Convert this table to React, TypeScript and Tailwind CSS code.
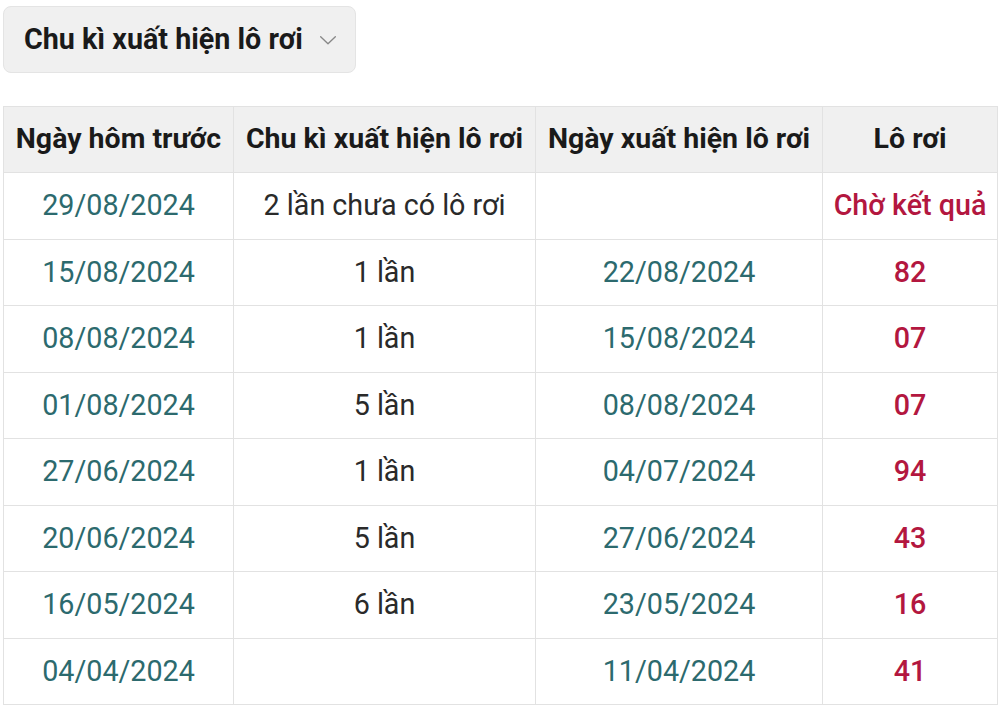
const rows: [string, string, string, string][] = [
  ['29/08/2024', '2 lần chưa có lô rơi', '', 'Chờ kết quả'],
  ['15/08/2024', '1 lần', '22/08/2024', '82'],
  ['08/08/2024', '1 lần', '15/08/2024', '07'],
  ['01/08/2024', '5 lần', '08/08/2024', '07'],
  ['27/06/2024', '1 lần', '04/07/2024', '94'],
  ['20/06/2024', '5 lần', '27/06/2024', '43'],
  ['16/05/2024', '6 lần', '23/05/2024', '16'],
  ['04/04/2024', '', '11/04/2024', '41'],
];

const headers = ['Ngày hôm trước', 'Chu kì xuất hiện lô rơi', 'Ngày xuất hiện lô rơi', 'Lô rơi'];
const widths = ['w-[230px]', 'w-[302px]', 'w-[287px]', 'w-[175px]'];

export default function App() {
  return (
    <div className="min-h-[707px] bg-white pt-[6px] pl-[3px] font-['Roboto',sans-serif]">
      <button className="flex h-[67px] w-[353px] items-center gap-[14px] rounded-lg border border-[#e4e4e4] bg-[#f0f0f0] pl-[20px] text-[28.7px] font-bold text-[#1a1a1a]">
        Chu kì xuất hiện lô rơi
        <svg width="22" height="22" viewBox="0 0 24 24" fill="none" stroke="#888" strokeWidth="1.5" strokeLinecap="round" strokeLinejoin="round">
          <path d="M4 8.5l8 7.5 8-7.5" />
        </svg>
      </button>

      <table className="mt-[33px] table-fixed border-collapse">
        <thead>
          <tr className="h-[66px] bg-[#f0f0f0]">
            {headers.map((h, i) => (
              <th key={h} className={`${widths[i]} border border-[#e2e2e2] px-0 text-center text-[28.5px] font-bold whitespace-nowrap text-[#1a1a1a]`}>
                {h}
              </th>
            ))}
          </tr>
        </thead>
        <tbody>
          {rows.map((r) => (
            <tr key={r[0]} className="h-[66.5px]">
              <td className="border border-[#e2e2e2] text-center text-[28.7px] text-[#2c6a6e]">{r[0]}</td>
              <td className="border border-[#e2e2e2] text-center text-[28.7px] text-[#2a2a2a]">{r[1]}</td>
              <td className="border border-[#e2e2e2] text-center text-[28.7px] text-[#2c6a6e]">{r[2]}</td>
              <td className="border border-[#e2e2e2] text-center text-[28.7px] font-medium whitespace-nowrap text-[#b3173f]">{r[3]}</td>
            </tr>
          ))}
        </tbody>
      </table>
    </div>
  );
}
